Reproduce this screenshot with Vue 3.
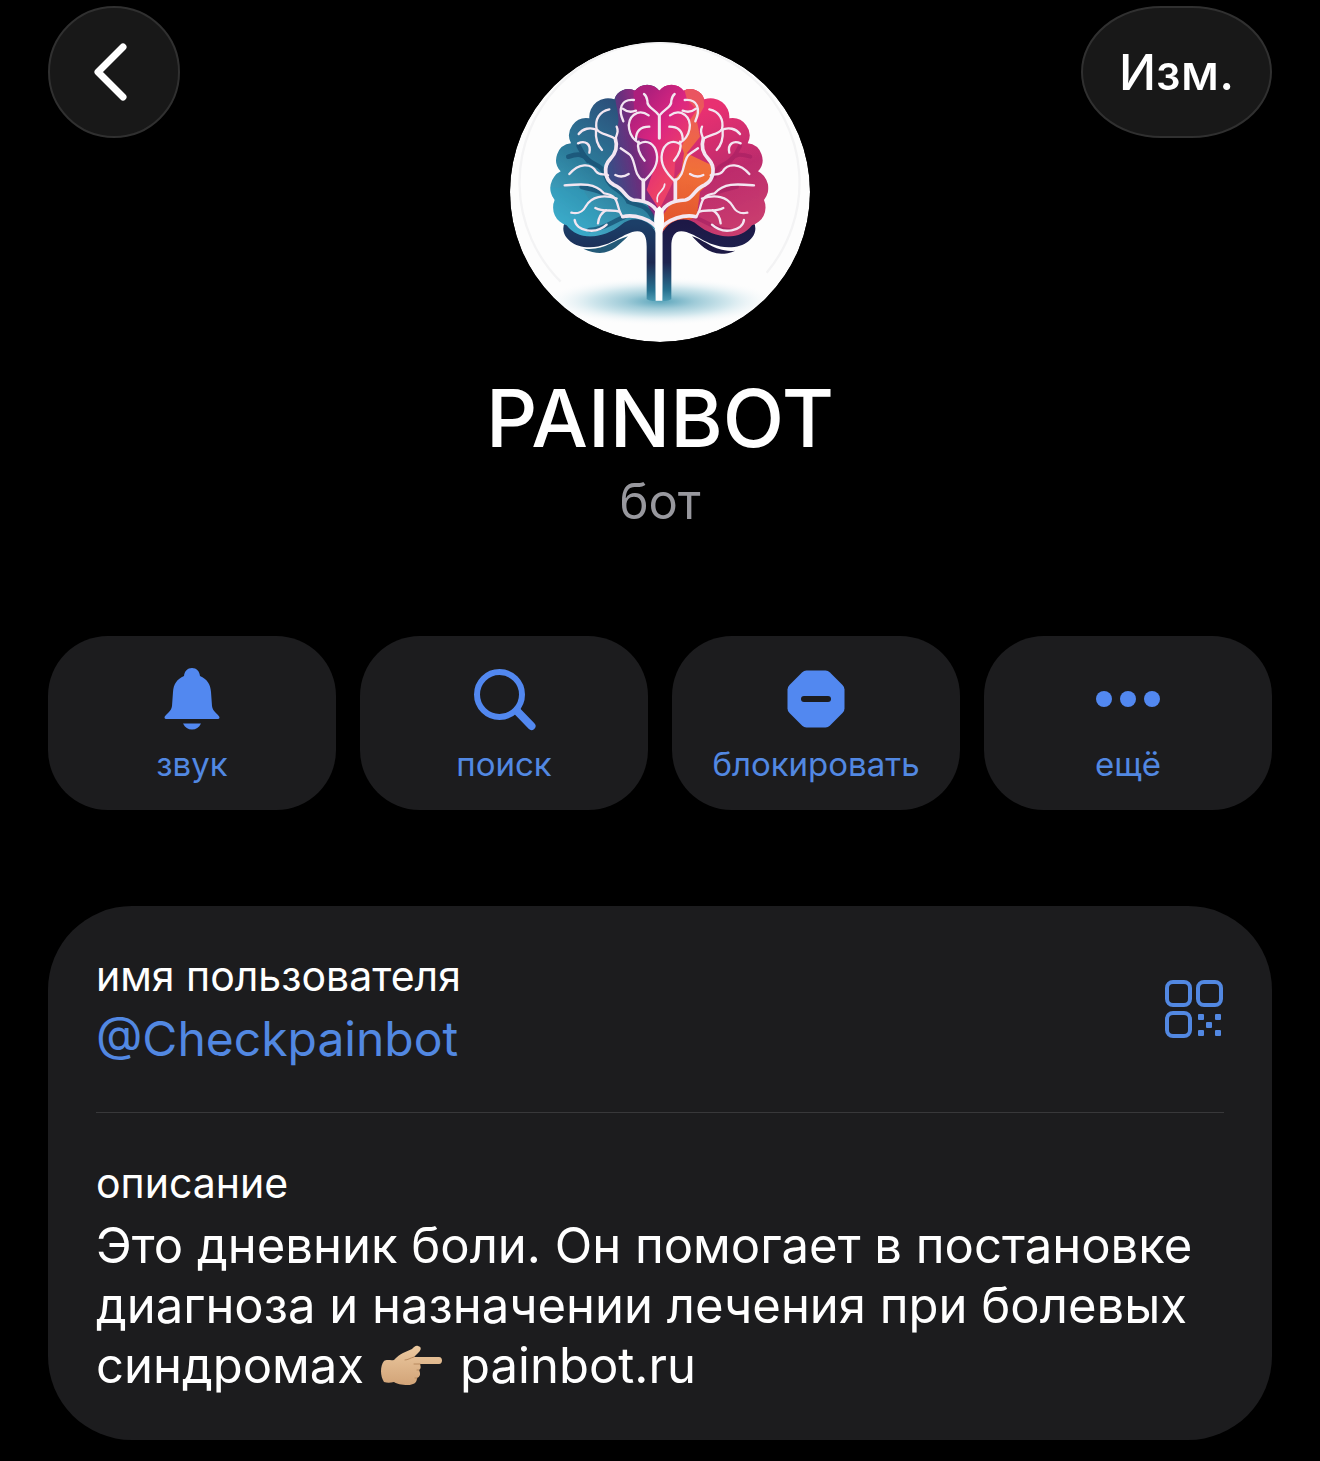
<script setup>
import { ref } from 'vue';

const profile = ref({
  name: 'PAINBOT',
  status: 'бот',
  username: '@Checkpainbot',
  about: 'Это дневник боли. Он помогает в постановке диагноза и назначении лечения при болевых',
  aboutEnd: 'синдромах',
  site: 'painbot.ru'
});

const actions = [
  { id: 'sound', label: 'звук' },
  { id: 'search', label: 'поиск' },
  { id: 'block', label: 'блокировать' },
  { id: 'more', label: 'ещё' }
];

// veins of the left half, the right half is mirrored
const thickVeins = [
  'M477 600V560C470 530 445 512 400 510C375 505 375 478 342 465C312 450 310 408 330 388C352 366 352 345 346 326',
  'M430 512V450',
  'M477 602C455 565 400 552 368 560'
];
const veins = [
  'M430 455C462 425 476 400 470 370C464 342 442 328 420 340',
  'M430 452C396 432 410 385 386 371L362 355',
  'M346 328C352 310 356 302 350 290',
  'M346 326C320 312 300 312 290 298C284 268 298 244 328 238',
  'M292 300C270 290 248 296 236 312',
  'M288 300C286 325 292 345 306 360',
  'M418 340C384 320 376 275 402 254C415 245 432 246 446 256',
  'M408 328C408 300 425 290 448 290',
  'M416 335C408 360 424 380 434 392',
  'M477 325V256C462 236 440 232 442 212Q440 198 432 192',
  'M370 274C354 238 362 206 402 210',
  'M368 236C380 246 392 248 408 242',
  'M368 560C346 535 364 496 312 490C284 458 246 462 194 466',
  'M350 506C310 492 274 500 258 528C246 550 232 552 214 548',
  'M360 546C340 536 312 548 286 534',
  'M318 541C302 550 296 560 294 580',
  'M224 570C228 602 286 616 320 584',
  'M208 432C236 400 272 398 288 424C298 438 310 430 324 436',
  'M234 340C256 330 274 342 268 368',
  'M346 435Q366 445 386 432'
];
const shadows = [
  'M205 380C235 370 250 372 265 390C285 410 302 398 318 440C330 480 370 478 385 515C420 530 440 520 465 575',
  'M236 348Q246 370 264 392',
  'M245 470C275 480 295 480 310 492',
  'M268 600C310 600 340 572 372 562'
];
</script>

<template>
  <main class="page">
    <header class="top">
      <button class="glass back" aria-label="Назад">
        <svg width="132" height="132" viewBox="0 0 132 132" fill="none">
          <path d="M75 41L50 66L75 91" stroke="#fff" stroke-width="7" stroke-linecap="round" stroke-linejoin="round" />
        </svg>
      </button>

      <svg class="avatar" viewBox="30 36 900 900" role="img" aria-label="PAINBOT">
        <defs>
          <clipPath id="crown">
            <path d="M478 182A46 46 0 0 0 405 182A44 44 0 0 0 343 208A56 56 0 0 0 268 265A52 52 0 0 0 213 340A50 50 0 0 0 182 424A56 56 0 0 0 164 510A56 56 0 0 0 200 586C240 640 320 620 362 586C400 552 450 570 470 610L486 610C506 570 556 552 594 586C636 620 716 640 756 586A56 56 0 0 0 792 510A56 56 0 0 0 774 424A50 50 0 0 0 743 340A52 52 0 0 0 688 265A56 56 0 0 0 613 208A44 44 0 0 0 551 182A46 46 0 0 0 478 182Z" />
          </clipPath>
          <linearGradient id="teal" x1="160" y1="560" x2="380" y2="240" gradientUnits="userSpaceOnUse">
            <stop offset="0" stop-color="#45aecb" />
            <stop offset="0.45" stop-color="#2e7f9d" />
            <stop offset="1" stop-color="#2b4f7a" />
          </linearGradient>
          <linearGradient id="violet" x1="330" y1="400" x2="475" y2="370" gradientUnits="userSpaceOnUse">
            <stop offset="0" stop-color="#3c4c86" />
            <stop offset="0.5" stop-color="#6b2f7d" />
            <stop offset="1" stop-color="#b52282" />
          </linearGradient>
          <linearGradient id="pink" x1="400" y1="240" x2="560" y2="360" gradientUnits="userSpaceOnUse">
            <stop offset="0" stop-color="#ad1f7c" />
            <stop offset="0.5" stop-color="#dc2680" />
            <stop offset="1" stop-color="#ec4068" />
          </linearGradient>
          <linearGradient id="orange" x1="600" y1="200" x2="540" y2="560" gradientUnits="userSpaceOnUse">
            <stop offset="0" stop-color="#ea5560" />
            <stop offset="0.6" stop-color="#f1703a" />
            <stop offset="1" stop-color="#e4582f" />
          </linearGradient>
          <linearGradient id="rose" x1="620" y1="240" x2="780" y2="600" gradientUnits="userSpaceOnUse">
            <stop offset="0" stop-color="#e83071" />
            <stop offset="0.5" stop-color="#bd2c6d" />
            <stop offset="1" stop-color="#cb406f" />
          </linearGradient>
          <linearGradient id="stemLeft" x1="0" y1="580" x2="0" y2="815" gradientUnits="userSpaceOnUse">
            <stop offset="0" stop-color="#1c3f68" />
            <stop offset="0.5" stop-color="#1c2850" />
            <stop offset="0.85" stop-color="#26708f" />
            <stop offset="1" stop-color="#4d9db5" />
          </linearGradient>
          <linearGradient id="stemRight" x1="0" y1="580" x2="0" y2="815" gradientUnits="userSpaceOnUse">
            <stop offset="0" stop-color="#1d1846" />
            <stop offset="0.5" stop-color="#1e2450" />
            <stop offset="0.85" stop-color="#26708f" />
            <stop offset="1" stop-color="#4d9db5" />
          </linearGradient>
          <radialGradient id="ground">
            <stop offset="0" stop-color="#5ba5bb" />
            <stop offset="0.3" stop-color="#9fcbd8" />
            <stop offset="0.6" stop-color="#d3e8ee" />
            <stop offset="1" stop-color="#fcfcfd" stop-opacity="0" />
          </radialGradient>
        </defs>

        <circle cx="480" cy="486" r="450" fill="#fdfdfd" />
        <path d="M182 755A420 420 0 1 1 800 728" fill="none" stroke="#f3f3f4" stroke-width="7" />
        <ellipse cx="480" cy="814" rx="350" ry="72" fill="url(#ground)" />

        <!-- roots -->
        <path fill="url(#stemLeft)" d="M194 578C178 610 210 652 270 652C340 650 370 606 412 604C434 604 440 622 440 650V808Q454 816 467 812V606L440 560H360L300 600Z" />
        <path fill="url(#stemRight)" d="M762 578C778 610 746 652 686 652C616 650 586 606 544 604C522 604 514 622 514 650V808Q500 816 487 812V606L516 560H596L656 600Z" />
        <path fill="#245a78" d="M250 656C312 664 336 632 384 619C350 650 322 690 250 656Z" />
        <path fill="#1d1a45" d="M706 662C644 668 620 632 576 619C606 650 640 690 706 662Z" />

        <g clip-path="url(#crown)">
          <rect x="140" y="150" width="340" height="480" fill="url(#teal)" />
          <rect x="477" y="150" width="340" height="480" fill="url(#rose)" />
          <path fill="url(#violet)" d="M345 160L400 160L478 260V600L440 520L400 508L340 462C312 440 314 405 332 386C356 360 350 330 352 290C364 250 340 230 345 160Z" />
          <path fill="url(#pink)" d="M400 150H560L570 240L560 330L525 400L522 450L478 540L440 480L474 380L450 330L400 320L385 280L402 240Z" />
          <path fill="url(#orange)" d="M545 150L610 180L612 230L590 270L600 320L560 370L634 405L636 450L600 485L590 560L480 605L486 560L522 505V450L545 420L552 370L545 350L562 310L570 270L590 240L560 205Z" />
          <path fill="#29a3c4" opacity="0.3" d="M140 470L250 480L300 560L250 640H140Z" />
          <g fill="none" stroke-linecap="round">
            <g stroke="#174e72" stroke-width="14" opacity="0.75">
              <path v-for="d in shadows" :key="d" :d="d" />
            </g>
            <g stroke="#a31e62" stroke-width="12" opacity="0.6" transform="translate(956 0) scale(-1 1)">
              <path v-for="d in shadows.slice(1)" :key="d" :d="d" />
              <path d="M205 380C235 370 250 372 265 390C285 410 302 398 312 440" />
            </g>
          </g>
        </g>

        <g fill="none" stroke="#f3e6f1" stroke-linecap="round" stroke-linejoin="round">
          <g v-for="side in ['left', 'right']" :key="side" :transform="side === 'right' ? 'translate(956 0) scale(-1 1)' : undefined">
            <path v-for="d in thickVeins" :key="d" :d="d" stroke-width="11" />
            <path v-for="d in veins" :key="d" :d="d" stroke-width="7" />
          </g>
          <path d="M472 515C466 485 494 486 494 462" stroke-width="5" />
        </g>
        <path fill="#fdfdfd" d="M467 812V610C462 585 460 570 466 540L478 528L490 540C494 570 492 590 487 610V812Z" />
      </svg>

      <button class="glass edit">Изм.</button>
    </header>

    <section class="identity">
      <h1>{{ profile.name }}</h1>
      <p>{{ profile.status }}</p>
    </section>

    <nav class="actions">
      <button v-for="action in actions" :key="action.id" class="action">
        <svg width="72" height="72" viewBox="0 0 72 72" fill="#5288f0">
          <template v-if="action.id === 'sound'">
            <path d="M36 5C40.500 5 43.500 8 44 13C51 16 54.500 21 55 29L56 43C56.500 49 63.500 52 63.500 54.500C63.500 56 62.500 56 61 56H11C9.500 56 8.500 56 8.500 54.500C8.500 52 15.500 49 16 43L17 29C17.500 21 21 16 28 13C28.500 8 31.500 5 36 5Z" />
            <path d="M27 60.500H45C43 64.500 40 66.500 36 66.500S29 64.500 27 60.500Z" />
          </template>
          <template v-else-if="action.id === 'search'">
            <circle cx="31.500" cy="31.500" r="22.500" fill="none" stroke="#5288f0" stroke-width="6" />
            <path d="M49 48L63.500 63" fill="none" stroke="#5288f0" stroke-width="8" stroke-linecap="round" />
          </template>
          <template v-else-if="action.id === 'block'">
            <path d="M26.500 7.500H45.500Q48 7.500 50 9.500L62.500 22Q64.500 24 64.500 26.500V45.500Q64.500 48 62.500 50L50 62.500Q48 64.500 45.500 64.500H26.500Q24 64.500 22 62.500L9.500 50Q7.500 48 7.500 45.500V26.500Q7.500 24 9.500 22L22 9.500Q24 7.500 26.500 7.500Z" />
            <rect x="21" y="33" width="30" height="6" rx="3" fill="#1c1c1e" />
          </template>
          <template v-else>
            <circle cx="12" cy="36" r="8" />
            <circle cx="36" cy="36" r="8" />
            <circle cx="60" cy="36" r="8" />
          </template>
        </svg>
        <span>{{ action.label }}</span>
      </button>
    </nav>

    <section class="card">
      <div class="row username">
        <div>
          <h2>имя пользователя</h2>
          <a href="#">{{ profile.username }}</a>
        </div>
        <button class="qr" aria-label="QR-код">
          <svg width="60" height="60" viewBox="0 0 60 60" fill="none">
            <g stroke="#5288e2" stroke-width="4">
              <rect x="3" y="3" width="23" height="23" rx="6" />
              <rect x="34" y="3" width="23" height="23" rx="6" />
              <rect x="3" y="34" width="23" height="23" rx="6" />
            </g>
            <g fill="#5288e2">
              <rect x="34" y="35" width="6" height="6" rx="1" />
              <rect x="51" y="35" width="6" height="6" rx="1" />
              <rect x="42" y="43" width="6" height="6" rx="1" />
              <rect x="34" y="51" width="6" height="6" rx="1" />
              <rect x="51" y="51" width="6" height="6" rx="1" />
            </g>
          </svg>
        </button>
      </div>
      <div class="row about">
        <h2>описание</h2>
        <p>
          {{ profile.about }}
          <span class="ending">
            <span>{{ profile.aboutEnd }}</span>
            <svg width="64" height="42" viewBox="0 0 64 42" role="img" aria-label="указывает вправо">
              <defs>
                <linearGradient id="skin" x1="0" y1="0" x2="0" y2="1">
                  <stop offset="0" stop-color="#ecc9a0" />
                  <stop offset="1" stop-color="#d2a478" />
                </linearGradient>
              </defs>
              <path fill="url(#skin)" d="M4 16C7 14 11 16 14 15C20 8 26 7 32 4C34 2 36 0 38 1C42 2 41 5 39 7L34 12H59C63 12 63 19 59 19H40C41 22 41 24 39 25C41 29 40 32 37 33C37 38 33 40 28 40C21 40 17 39 14 37C10 38 7 38 4 37C0 31 0 21 4 16Z" />
              <path fill="none" stroke="#b98a5e" stroke-width="1" stroke-linecap="round" d="M34 12C30 13 28 15 25 15M40 19H34M39 25H37M37 33H35" />
            </svg>
            <span>{{ profile.site }}</span>
          </span>
        </p>
      </div>
    </section>
  </main>
</template>

<style>
body {
  margin: 0;
  background: #000;
}
</style>

<style scoped>
.page {
  box-sizing: border-box;
  min-height: 100vh;
  padding: 6px 48px 20px;
  background: #000;
  color: #fff;
  font-family: Inter, "Liberation Sans", sans-serif;
}
button {
  margin: 0;
  padding: 0;
  border: none;
  background: none;
  color: inherit;
  font: inherit;
  cursor: pointer;
}
svg {
  display: block;
}
h1, h2, p {
  margin: 0;
  font-weight: 400;
}
.top {
  display: grid;
  grid-template-columns: 1fr auto 1fr;
  align-items: start;
}
.glass {
  box-sizing: border-box;
  height: 132px;
  border: 2px solid #303030;
  background: #181818;
}
.back {
  display: flex;
  align-items: center;
  justify-content: center;
  width: 132px;
  border-radius: 50%;
}
.back svg {
  flex: none;
}
.edit {
  justify-self: end;
  padding: 0 36px;
  border-radius: 80px / 66px;
  font-size: 49px;
  font-weight: 500;
}
.avatar {
  width: 300px;
  height: 300px;
  margin-top: 36px;
  border-radius: 50%;
  overflow: hidden;
}
.identity {
  margin-top: 28px;
  text-align: center;
}
.identity h1 {
  font-size: 80px;
  font-weight: 500;
  line-height: 96px;
}
.identity p {
  padding-top: 4px;
  color: #98989e;
  font-size: 49px;
  line-height: 64px;
}
.actions {
  display: grid;
  grid-template-columns: repeat(4, 1fr);
  gap: 24px;
  margin-top: 102px;
}
.action {
  display: flex;
  flex-direction: column;
  align-items: center;
  gap: 8px;
  padding: 27px 0 25px;
  border-radius: 60px;
  background: #1c1c1e;
  color: #5288e2;
  font-size: 33px;
  line-height: 42px;
}
.card {
  margin-top: 96px;
  padding: 0 48px;
  border-radius: 84px;
  background: #1c1c1e;
}
.card h2 {
  font-size: 41px;
  line-height: 52px;
}
.username {
  display: flex;
  align-items: center;
  justify-content: space-between;
  padding: 44px 0;
  border-bottom: 1px solid #38383a;
}
.username a {
  display: block;
  padding-top: 8px;
  color: #5288e2;
  font-size: 48px;
  line-height: 58px;
  text-decoration: none;
}
.about {
  padding: 44px 0;
}
.about p {
  padding-top: 7px;
  font-size: 49px;
  line-height: 60px;
}
.ending {
  display: inline-flex;
  align-items: center;
  gap: 16px;
  vertical-align: top;
}
</style>
